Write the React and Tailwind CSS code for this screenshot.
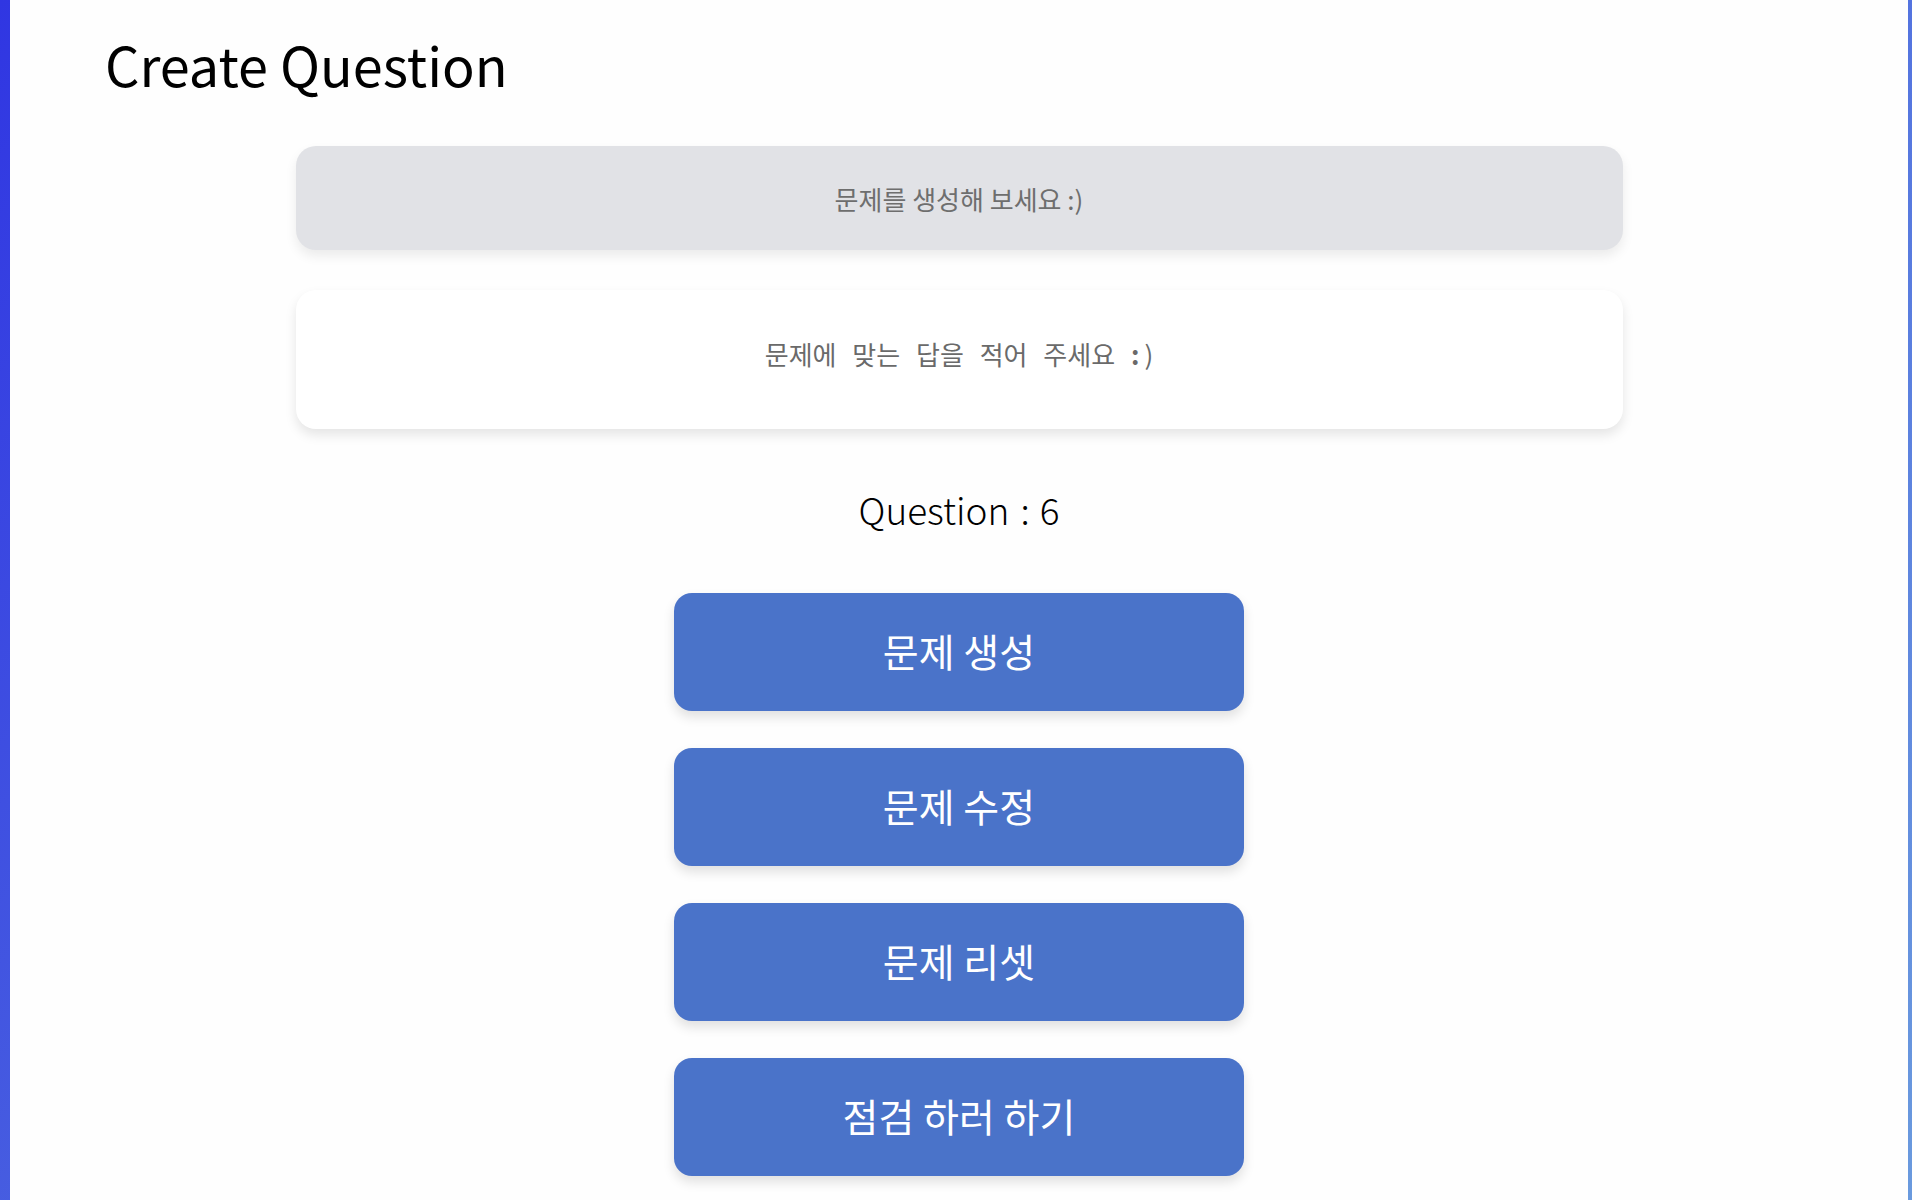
// Create Question page: prompt boxes, counter and action buttons
const actions = ["문제 생성", "문제 수정", "문제 리셋", "점검 하러 하기"];

export default function App() {
    return (
        <div className="h-[1200px] overflow-hidden bg-[linear-gradient(135deg,#3036e2,#6a9ade)] pl-[10px] pr-[4px] font-['Noto_Sans_CJK_KR','Noto_Sans',sans-serif]">
            <div className="h-full bg-[#fefefe]">
                {/* Title */}
                <h1 className="pl-[95px] pt-[31px] text-[54px] leading-[66px] text-black">Create Question</h1>

                {/* Prompt boxes */}
                <div className="mx-auto mt-[49px] flex w-[1327px] flex-col gap-[40px]">
                    <div className="flex h-[104px] items-center justify-center rounded-[20px] bg-[#e1e2e6] text-[26px] text-[#6e6e6e] shadow-[0_6px_12px_rgba(0,0,0,0.08)]">
                        문제를 생성해 보세요 :)
                    </div>
                    <div className="flex h-[139px] items-center justify-center rounded-[20px] bg-white pb-[12px] text-[26px] text-[#6a6a6a] [word-spacing:10px] shadow-[0_6px_12px_rgba(0,0,0,0.1)]">
                        <span>
                            문제에 맞는 답을 적어 주세요 <span className="font-bold">:</span><span className="ml-[5px]">)</span>
                        </span>
                    </div>
                </div>

                {/* Counter */}
                <p className="mt-[56px] text-center text-[37px] font-extralight leading-[48px] text-black">
                    Question<span className="ml-[11px]">:</span><span className="ml-[10px]">6</span>
                </p>

                {/* Buttons */}
                <div className="mx-auto mt-[60px] flex w-[570px] flex-col gap-[37px]">
                    {actions.map((label) => (
                        <button
                            key={label}
                            className="flex h-[118px] items-center justify-center rounded-[18px] bg-[#4a73c9] pb-[4px] text-[39px] text-white shadow-[0_6px_12px_rgba(0,0,0,0.12)]"
                        >
                            {label}
                        </button>
                    ))}
                </div>
            </div>
        </div>
    );
}
